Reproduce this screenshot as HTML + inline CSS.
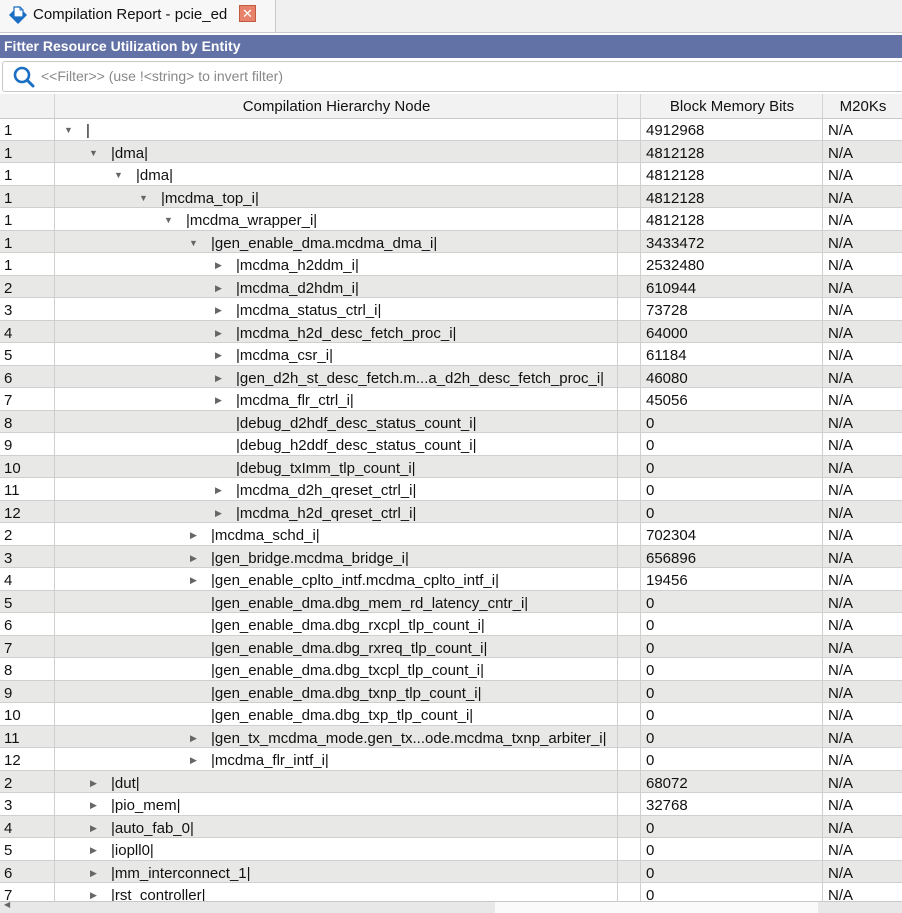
<!DOCTYPE html>
<html><head><meta charset="utf-8"><style>
body{margin:0;width:902px;height:912px;overflow:hidden;background:#fff;font-family:"Liberation Sans",sans-serif;font-size:15px;color:#111;position:relative}
.tabbar{position:absolute;left:0;top:0;width:902px;height:32px;background:#f0f0f0;border-bottom:1px solid #c8c8c8}
.tab{position:absolute;left:0;top:0;width:275px;height:32px;background:#f7f7f7;border-right:1px solid #c8c8c8}
.title{position:absolute;left:0;top:35px;width:902px;height:23px;background:#6372a6;color:#fff;font-weight:bold;font-size:14px;line-height:23px;padding-left:4px;box-sizing:border-box}
.filter{position:absolute;left:2px;top:61px;width:910px;height:29px;border:1px solid #c8c8c8;border-radius:3px;background:#fff}
.filter span{position:absolute;left:38px;top:6px;color:#888;font-size:14px}
.hdr{position:absolute;left:0;top:94px;width:902px;height:24px;background:#f2f2f2;border-bottom:1px solid #c8c8c8}
.hdr div{position:absolute;top:0;height:24px;line-height:26px;text-align:center;border-left:1px solid #d4d4d4}
.r{position:absolute;left:0;width:902px;height:22.5px;line-height:25px;border-bottom:1px solid #cfcfcf;box-sizing:border-box}
.g{background:#e8e8e6}
.r span{position:absolute;top:0;white-space:nowrap}
.n{left:4px}.v{left:646px}.m{left:828px}
.a{font-size:9px;color:#666}
.cl{position:absolute;top:118px;height:783px;width:1px;background:#cfcfcf}
.sb{position:absolute;left:0;top:901px;width:902px;height:11px;background:#e8e8e8;border-top:1px solid #c8c8c8}
</style></head><body>
<div class="tabbar"><div class="tab">
<svg style="position:absolute;left:7px;top:4px" width="22" height="22" viewBox="0 0 22 22"><path d="M11 2 L20 11 L11 20 L2 11 Z" fill="#1a6fc4"/><path d="M7 3 h6 l3 3 v7 h-9 z" fill="#fff" stroke="#1a6fc4" stroke-width="1.2"/><path d="M13 3 v3 h3" fill="none" stroke="#1a6fc4"/></svg>
<span style="position:absolute;left:33px;top:6px;font-size:15px">Compilation Report - pcie_ed</span>
<div style="position:absolute;left:239px;top:5px;width:17px;height:17px;background:#e8826a;border:1px solid #c05a40;box-sizing:border-box;color:#fff;font-size:13px;line-height:15px;text-align:center">✕</div>
</div></div>
<div class="title">Fitter Resource Utilization by Entity</div>
<div class="filter"><svg style="position:absolute;left:9px;top:3px" width="24" height="24" viewBox="0 0 24 24"><circle cx="10" cy="10" r="7" fill="none" stroke="#1a6fc4" stroke-width="2.6"/><path d="M15 15 L21 21" stroke="#1a6fc4" stroke-width="3" stroke-linecap="round"/></svg><span>&lt;&lt;Filter&gt;&gt; (use !&lt;string&gt; to invert filter)</span></div>
<div class="hdr"><div style="left:0;width:54px;border:none"></div><div style="left:54px;width:563px">Compilation Hierarchy Node</div><div style="left:617px;width:23px"></div><div style="left:640px;width:182px">Block Memory Bits</div><div style="left:822px;width:80px">M20Ks</div></div>
<div class="r" style="top:118px"><span class="n">1</span><span class="a" style="left:64px">▼</span><span style="left:86px">|</span><span class="v">4912968</span><span class="m">N/A</span></div>
<div class="r g" style="top:140.5px"><span class="n">1</span><span class="a" style="left:89px">▼</span><span style="left:111px">|dma|</span><span class="v">4812128</span><span class="m">N/A</span></div>
<div class="r" style="top:163px"><span class="n">1</span><span class="a" style="left:114px">▼</span><span style="left:136px">|dma|</span><span class="v">4812128</span><span class="m">N/A</span></div>
<div class="r g" style="top:185.5px"><span class="n">1</span><span class="a" style="left:139px">▼</span><span style="left:161px">|mcdma_top_i|</span><span class="v">4812128</span><span class="m">N/A</span></div>
<div class="r" style="top:208px"><span class="n">1</span><span class="a" style="left:164px">▼</span><span style="left:186px">|mcdma_wrapper_i|</span><span class="v">4812128</span><span class="m">N/A</span></div>
<div class="r g" style="top:230.5px"><span class="n">1</span><span class="a" style="left:189px">▼</span><span style="left:211px">|gen_enable_dma.mcdma_dma_i|</span><span class="v">3433472</span><span class="m">N/A</span></div>
<div class="r" style="top:253px"><span class="n">1</span><span class="a" style="left:215px">▶</span><span style="left:236px">|mcdma_h2ddm_i|</span><span class="v">2532480</span><span class="m">N/A</span></div>
<div class="r g" style="top:275.5px"><span class="n">2</span><span class="a" style="left:215px">▶</span><span style="left:236px">|mcdma_d2hdm_i|</span><span class="v">610944</span><span class="m">N/A</span></div>
<div class="r" style="top:298px"><span class="n">3</span><span class="a" style="left:215px">▶</span><span style="left:236px">|mcdma_status_ctrl_i|</span><span class="v">73728</span><span class="m">N/A</span></div>
<div class="r g" style="top:320.5px"><span class="n">4</span><span class="a" style="left:215px">▶</span><span style="left:236px">|mcdma_h2d_desc_fetch_proc_i|</span><span class="v">64000</span><span class="m">N/A</span></div>
<div class="r" style="top:343px"><span class="n">5</span><span class="a" style="left:215px">▶</span><span style="left:236px">|mcdma_csr_i|</span><span class="v">61184</span><span class="m">N/A</span></div>
<div class="r g" style="top:365.5px"><span class="n">6</span><span class="a" style="left:215px">▶</span><span style="left:236px">|gen_d2h_st_desc_fetch.m...a_d2h_desc_fetch_proc_i|</span><span class="v">46080</span><span class="m">N/A</span></div>
<div class="r" style="top:388px"><span class="n">7</span><span class="a" style="left:215px">▶</span><span style="left:236px">|mcdma_flr_ctrl_i|</span><span class="v">45056</span><span class="m">N/A</span></div>
<div class="r g" style="top:410.5px"><span class="n">8</span><span style="left:236px">|debug_d2hdf_desc_status_count_i|</span><span class="v">0</span><span class="m">N/A</span></div>
<div class="r" style="top:433px"><span class="n">9</span><span style="left:236px">|debug_h2ddf_desc_status_count_i|</span><span class="v">0</span><span class="m">N/A</span></div>
<div class="r g" style="top:455.5px"><span class="n">10</span><span style="left:236px">|debug_txImm_tlp_count_i|</span><span class="v">0</span><span class="m">N/A</span></div>
<div class="r" style="top:478px"><span class="n">11</span><span class="a" style="left:215px">▶</span><span style="left:236px">|mcdma_d2h_qreset_ctrl_i|</span><span class="v">0</span><span class="m">N/A</span></div>
<div class="r g" style="top:500.5px"><span class="n">12</span><span class="a" style="left:215px">▶</span><span style="left:236px">|mcdma_h2d_qreset_ctrl_i|</span><span class="v">0</span><span class="m">N/A</span></div>
<div class="r" style="top:523px"><span class="n">2</span><span class="a" style="left:190px">▶</span><span style="left:211px">|mcdma_schd_i|</span><span class="v">702304</span><span class="m">N/A</span></div>
<div class="r g" style="top:545.5px"><span class="n">3</span><span class="a" style="left:190px">▶</span><span style="left:211px">|gen_bridge.mcdma_bridge_i|</span><span class="v">656896</span><span class="m">N/A</span></div>
<div class="r" style="top:568px"><span class="n">4</span><span class="a" style="left:190px">▶</span><span style="left:211px">|gen_enable_cplto_intf.mcdma_cplto_intf_i|</span><span class="v">19456</span><span class="m">N/A</span></div>
<div class="r g" style="top:590.5px"><span class="n">5</span><span style="left:211px">|gen_enable_dma.dbg_mem_rd_latency_cntr_i|</span><span class="v">0</span><span class="m">N/A</span></div>
<div class="r" style="top:613px"><span class="n">6</span><span style="left:211px">|gen_enable_dma.dbg_rxcpl_tlp_count_i|</span><span class="v">0</span><span class="m">N/A</span></div>
<div class="r g" style="top:635.5px"><span class="n">7</span><span style="left:211px">|gen_enable_dma.dbg_rxreq_tlp_count_i|</span><span class="v">0</span><span class="m">N/A</span></div>
<div class="r" style="top:658px"><span class="n">8</span><span style="left:211px">|gen_enable_dma.dbg_txcpl_tlp_count_i|</span><span class="v">0</span><span class="m">N/A</span></div>
<div class="r g" style="top:680.5px"><span class="n">9</span><span style="left:211px">|gen_enable_dma.dbg_txnp_tlp_count_i|</span><span class="v">0</span><span class="m">N/A</span></div>
<div class="r" style="top:703px"><span class="n">10</span><span style="left:211px">|gen_enable_dma.dbg_txp_tlp_count_i|</span><span class="v">0</span><span class="m">N/A</span></div>
<div class="r g" style="top:725.5px"><span class="n">11</span><span class="a" style="left:190px">▶</span><span style="left:211px">|gen_tx_mcdma_mode.gen_tx...ode.mcdma_txnp_arbiter_i|</span><span class="v">0</span><span class="m">N/A</span></div>
<div class="r" style="top:748px"><span class="n">12</span><span class="a" style="left:190px">▶</span><span style="left:211px">|mcdma_flr_intf_i|</span><span class="v">0</span><span class="m">N/A</span></div>
<div class="r g" style="top:770.5px"><span class="n">2</span><span class="a" style="left:90px">▶</span><span style="left:111px">|dut|</span><span class="v">68072</span><span class="m">N/A</span></div>
<div class="r" style="top:793px"><span class="n">3</span><span class="a" style="left:90px">▶</span><span style="left:111px">|pio_mem|</span><span class="v">32768</span><span class="m">N/A</span></div>
<div class="r g" style="top:815.5px"><span class="n">4</span><span class="a" style="left:90px">▶</span><span style="left:111px">|auto_fab_0|</span><span class="v">0</span><span class="m">N/A</span></div>
<div class="r" style="top:838px"><span class="n">5</span><span class="a" style="left:90px">▶</span><span style="left:111px">|iopll0|</span><span class="v">0</span><span class="m">N/A</span></div>
<div class="r g" style="top:860.5px"><span class="n">6</span><span class="a" style="left:90px">▶</span><span style="left:111px">|mm_interconnect_1|</span><span class="v">0</span><span class="m">N/A</span></div>
<div class="r" style="top:883px"><span class="n">7</span><span class="a" style="left:90px">▶</span><span style="left:111px">|rst_controller|</span><span class="v">0</span><span class="m">N/A</span></div>
<div class="cl" style="left:54px"></div><div class="cl" style="left:617px"></div><div class="cl" style="left:640px"></div><div class="cl" style="left:822px"></div>
<div class="sb"><div style="position:absolute;left:495px;top:0;width:323px;height:11px;background:#fafafa"></div><span style="position:absolute;left:4px;top:-2px;font-size:8px;color:#666">◀</span></div>
</body></html>
